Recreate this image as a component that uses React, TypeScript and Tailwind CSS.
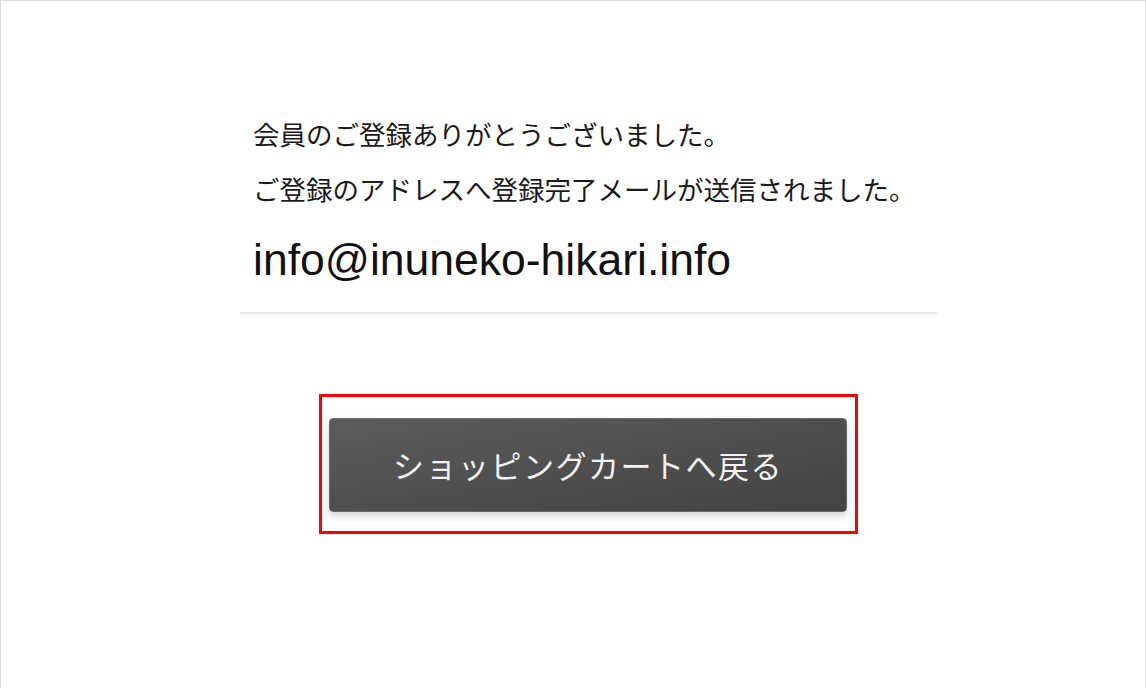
const jp = "font-['Hiragino_Sans','Noto_Sans_CJK_JP',sans-serif]";

export default function App() {
  return (
    <div className="w-[1146px] h-[688px] overflow-hidden bg-white border border-b-0 border-[#dadada]">
      <div className="ml-[239px] w-[697px] pt-[113px]">
        <div className={`pl-[13px] text-[26.5px] leading-[40px] text-[#1a1a1a] ${jp}`}>
          <p>会員のご登録ありがとうございました。</p>
          <p className="mt-[15px]">ご登録のアドレスへ登録完了メールが送信されました。</p>
        </div>
        <p className="pl-[13px] mt-[23px] text-[44.5px] leading-[56px] text-[#111] font-['Liberation_Sans',Arial,sans-serif]">
          info@inuneko-hikari.info
        </p>
        <div className="mt-[24px] h-[2px] bg-[#e6e6e6]" />

        <div className="mt-[80px] ml-[79px] w-[539px] h-[140px] border-[3px] border-[#ff0000] pt-[21px] pl-[7px]">
          <button
            className={`w-[518px] h-[94px] rounded-[4px] border border-[#6a6a6a] bg-gradient-to-br from-[#5c5c5c] to-[#424242] shadow-[0_4px_8px_rgba(0,0,0,0.18)] text-[31px] tracking-[1.5px] text-[#f2f2f2] ${jp}`}
          >
            ショッピングカートへ戻る
          </button>
        </div>
      </div>
    </div>
  );
}
